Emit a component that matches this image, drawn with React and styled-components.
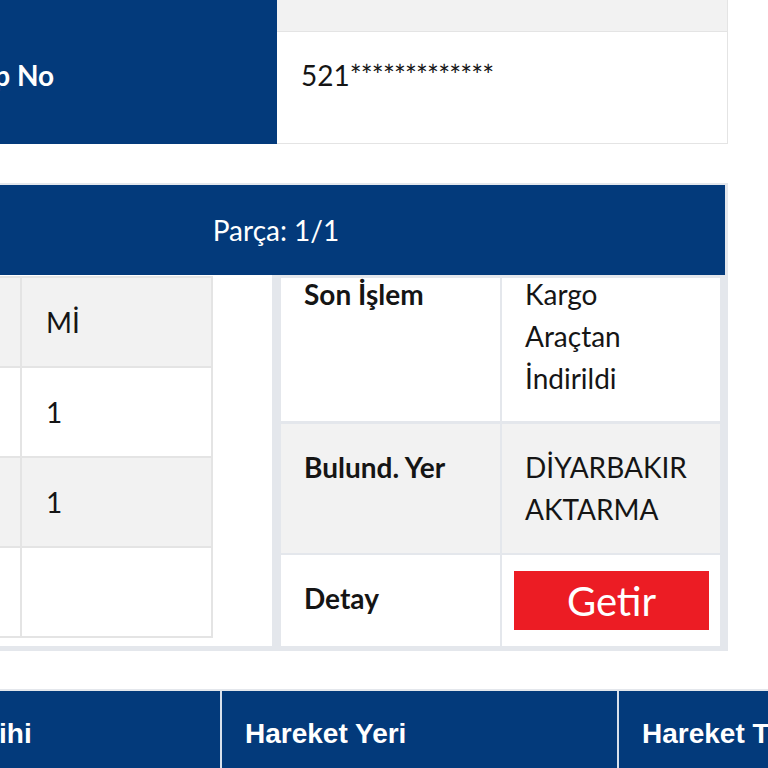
import React from 'react';
import styled, { createGlobalStyle } from 'styled-components';

const navy = '#033a7b';
const line = '#e4e4e4';
const frame = '#e4e7ec';

const GlobalStyle = createGlobalStyle`
  html, body {
    margin: 0;
    padding: 0;
    background: #fff;
    overflow: hidden;
  }
  body {
    font-family: 'Lato', 'Open Sans', sans-serif;
    color: #151515;
  }
`;

// the page is scrolled sideways, so the sheet starts left of the window
const Viewport = styled.div`
  width: 768px;
  height: 768px;
  overflow: hidden;
`;

const Sheet = styled.div`
  width: 904px;
  margin-left: -176px;
  display: flex;
  flex-direction: column;
`;

/* top info table */
const InfoTable = styled.div`
  display: grid;
  grid-template-columns: 453px 1fr;
  grid-template-rows: 32px 112px;
`;

const InfoLabel = styled.div`
  background: ${navy};
  color: #fff;
  font-weight: 700;
  font-size: 28px;
  line-height: 42px;
  padding: 22px 24px 0 40px;
`;

const InfoValue = styled.div`
  background: ${(p) => (p.$grey ? '#f2f2f2' : '#fff')};
  border-right: 1px solid ${line};
  border-bottom: 1px solid ${line};
  font-size: 28px;
  line-height: 42px;
  padding: 22px 24px 0 24px;
`;

const Masked = styled.span`
  letter-spacing: -0.85px;
`;

/* parcel card */
const Card = styled.div`
  margin-top: 39px;
  border: 3px solid ${frame};
  border-top-width: 2px;
  border-bottom-width: 5px;
`;

const CardHeader = styled.div`
  height: 90px;
  background: ${navy};
  color: #fff;
  font-size: 28px;
  display: flex;
  align-items: center;
  justify-content: center;
`;

const CardBody = styled.div`
  display: grid;
  grid-template-columns: 445px 1fr;
`;

const LeftPanel = styled.div`
  padding: 1px 59px 7px 0;
`;

const PieceTable = styled.div`
  display: grid;
  grid-template-columns: 1fr 189px;
  grid-auto-rows: 88px;
  gap: 2px;
  background: ${line};
  border: 2px solid ${line};
`;

const PieceCell = styled.div`
  background: ${(p) => (p.$grey ? '#f2f2f2' : '#fff')};
  display: flex;
  align-items: center;
  padding: 0 24px;
  font-size: 28px;
`;

const RightPanel = styled.div`
  background: ${frame};
  padding: 3px 5px 0 9px;
  display: grid;
  grid-template-columns: 219px 1fr;
  grid-template-rows: 143px 129px 90px;
  column-gap: 2px;
  row-gap: 3px;
  & > :nth-child(n + 5) {
    margin-top: -1px;
  }
`;

const DetailCell = styled.div`
  background: ${(p) => (p.$grey ? '#f2f2f2' : '#fff')};
  padding: ${(p) => p.$top}px 23px 0 23px;
  font-size: 28px;
  line-height: 42px;
  font-weight: ${(p) => (p.$bold ? 700 : 400)};
`;

// first row starts tucked under the card header
const Tucked = styled.div`
  margin-top: -5px;
`;

const ButtonCell = styled.div`
  background: #fff;
  display: flex;
  align-items: center;
  padding: 0 11px 0 12px;
`;

const GetirButton = styled.button`
  width: 100%;
  height: 59px;
  border: none;
  background: #ec1c24;
  color: #fff;
  font-family: 'Lato', sans-serif;
  font-size: 40px;
  cursor: pointer;
`;

/* movements table */
const MoveHead = styled.div`
  margin-top: 38px;
  width: 1191px;
  border-top: 2px solid ${frame};
  display: grid;
  grid-template-columns: 396px 395px 396px;
  column-gap: 2px;
  background: #d9e1ec;
`;

const MoveTitle = styled.div`
  background: ${navy};
  color: #fff;
  font-family: 'Liberation Sans', Arial, sans-serif;
  font-weight: 700;
  font-size: 28px;
  line-height: 42px;
  height: 90px;
  padding: 22px 23px 0 23px;
  box-sizing: border-box;
  white-space: nowrap;
`;

const pieces = [
  ['Desi', 'Mİ'],
  ['', '1'],
  ['', '1'],
  ['', ''],
];

export default function App() {
  return (
    <Viewport>
      <GlobalStyle />
      <Sheet>
        <InfoTable>
          <InfoLabel />
          <InfoValue $grey />
          <InfoLabel>Kargo Takip No</InfoLabel>
          <InfoValue>
            521<Masked>*************</Masked>
          </InfoValue>
        </InfoTable>

        <Card>
          <CardHeader>Parça: 1/1</CardHeader>
          <CardBody>
            <LeftPanel>
              <PieceTable>
                {pieces.map((row, i) =>
                  row.map((v, j) => (
                    <PieceCell key={`${i}-${j}`} $grey={i % 2 === 0}>
                      {v}
                    </PieceCell>
                  ))
                )}
              </PieceTable>
            </LeftPanel>

            <RightPanel>
              <DetailCell $bold $top={0}>
                <Tucked>Son İşlem</Tucked>
              </DetailCell>
              <DetailCell $top={0}>
                <Tucked>
                  Kargo
                  <br />
                  Araçtan
                  <br />
                  İndirildi
                </Tucked>
              </DetailCell>
              <DetailCell $bold $grey $top={22}>Bulund. Yer</DetailCell>
              <DetailCell $grey $top={22}>DİYARBAKIR AKTARMA</DetailCell>
              <DetailCell $bold $top={22}>Detay</DetailCell>
              <ButtonCell>
                <GetirButton>Getir</GetirButton>
              </ButtonCell>
            </RightPanel>
          </CardBody>
        </Card>

        <MoveHead>
          <MoveTitle>Hareket Tarihi</MoveTitle>
          <MoveTitle>Hareket Yeri</MoveTitle>
          <MoveTitle>Hareket Türü</MoveTitle>
        </MoveHead>
      </Sheet>
    </Viewport>
  );
}
